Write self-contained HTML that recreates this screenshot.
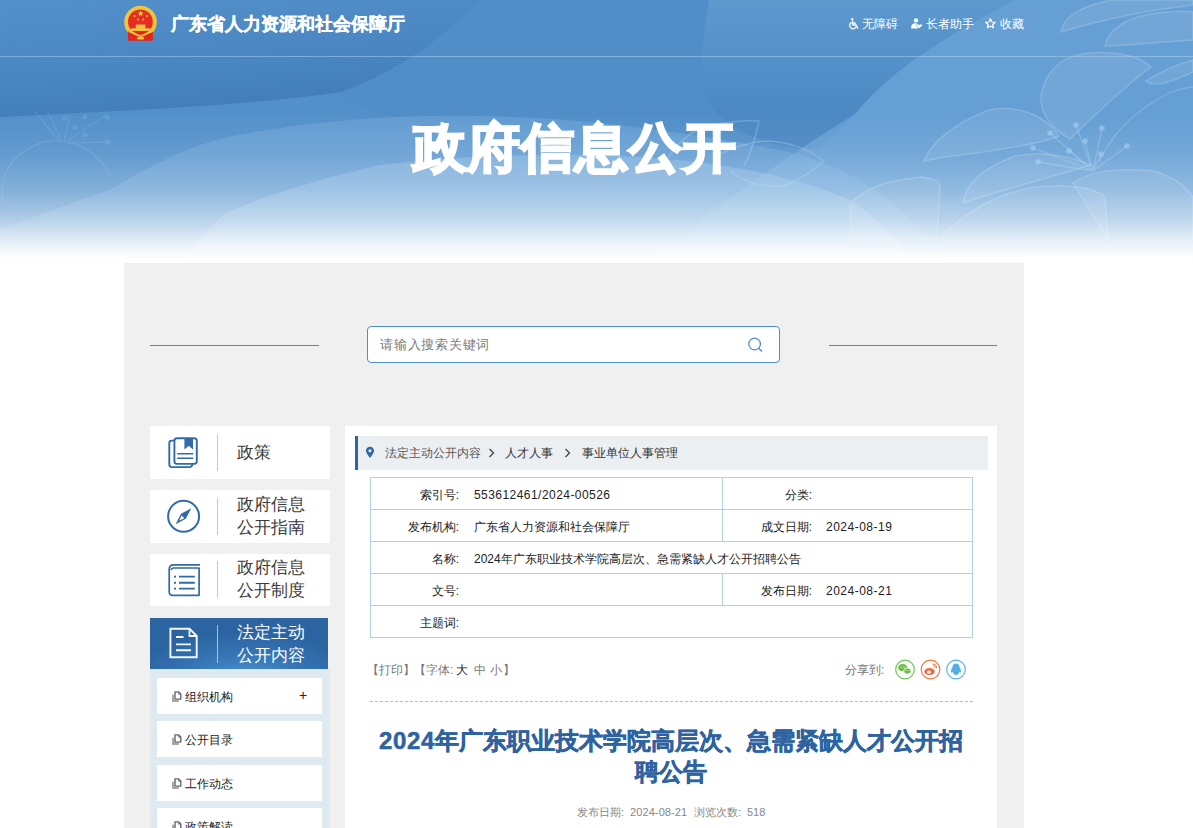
<!DOCTYPE html>
<html><head><meta charset="utf-8">
<style>
*{margin:0;padding:0;box-sizing:border-box}
html,body{width:1193px;height:828px;overflow:hidden;background:#fff;font-family:"Liberation Sans",sans-serif;color:#333}
.abs{position:absolute}
.hdr{position:absolute;left:0;top:0;width:1193px;height:263px;overflow:hidden;background:#5390ca}
.hdr svg{position:absolute;left:0;top:0}
.fade{position:absolute;left:0;top:0;width:1193px;height:263px;background:linear-gradient(180deg,rgba(255,255,255,0) 0px,rgba(255,255,255,0) 115px,rgba(255,255,255,.1) 155px,rgba(255,255,255,.28) 190px,rgba(255,255,255,.55) 220px,rgba(255,255,255,.85) 243px,#fff 259px)}
.topline{position:absolute;left:0;top:56px;width:1193px;height:1px;background:rgba(170,205,235,.55)}
.sitename{position:absolute;left:171px;top:13px;-webkit-text-stroke:0.3px #fff;font-size:18px;line-height:22px;font-weight:bold;color:#fff;white-space:nowrap}
.tools{position:absolute;top:16px;font-size:12px;line-height:16px;color:#fff;white-space:nowrap}
.bigtitle{position:absolute;left:413px;top:116px;-webkit-text-stroke:2.3px #fff;font-size:53px;letter-spacing:1.1px;line-height:64px;font-weight:bold;color:#fff;white-space:nowrap}
.wrap{position:absolute;left:124px;top:263px;width:900px;height:565px;background:#f0f0f0}
.sline{position:absolute;top:345px;height:1px;background:#4a8cc6}
.search{position:absolute;left:367px;top:326px;width:413px;height:37px;border:1px solid #4d8ecb;border-radius:4px;background:#fff}
.search span{position:absolute;left:12px;top:9px;font-size:13.3px;letter-spacing:0.75px;line-height:17px;color:#7a7a7a;white-space:nowrap}
.nav{position:absolute;left:150px;width:180px;height:53px;background:#fff}
.nav svg{position:absolute;left:0;top:0}
.nav .sep{position:absolute;left:67px;width:1px;background:#c8c8c8}
.nav .tx{position:absolute;left:87px;font-size:17px;color:#3c3c3c;line-height:23px;white-space:nowrap}
.nav.act{width:178px;height:51px;background:radial-gradient(ellipse 110px 45px at 95px 60px,#4a90d0 0%,#3574b5 55%,#2c64a2 100%)}
.nav.act .tx{color:#fff}
.nav.act .sep{background:rgba(255,255,255,.6)}
.sub{position:absolute;left:150px;top:669px;width:180px;height:159px;background:#dfe9f0}
.si{position:absolute;left:157px;width:165px;height:36px;background:#fff}
.si .t{position:absolute;left:27.5px;top:10.5px;font-size:12px;line-height:16px;color:#222;white-space:nowrap}
.si svg{position:absolute;left:15px;top:12.5px}
.main{position:absolute;left:345px;top:426px;width:652px;height:402px;background:#fff}
.bc{position:absolute;left:355px;top:436px;width:633px;height:34px;background:#eceff2;border-left:3px solid #2d67a3}
.bct{position:absolute;top:445px;font-size:12px;line-height:16px;color:#333;white-space:nowrap}
.tbl{position:absolute;left:370px;top:477px;width:603px;height:161px;border:1px solid #b5cee6}
.hl{position:absolute;left:370px;width:603px;height:1px;background:#b5cee6}
.vl{position:absolute;left:722px;width:1px;height:32px;background:#b5cee6}
.lab{position:absolute;font-size:12px;line-height:16px;color:#222;white-space:nowrap;text-align:right}
.val{position:absolute;font-size:12px;line-height:16px;color:#222;white-space:nowrap}
.g{color:#777}
.title{position:absolute;left:370px;top:726px;-webkit-text-stroke:0.5px #2e63a1;width:602px;text-align:center;font-size:24px;line-height:30.5px;font-weight:bold;color:#2e63a1}
.meta{position:absolute;top:804px;font-size:11px;line-height:16px;color:#888;white-space:nowrap}
</style></head><body>
<div class="hdr">
<svg width="1193" height="263" viewBox="0 0 1193 263">
  <defs>
    <linearGradient id="gd" x1="0" y1="0" x2="0.35" y2="1">
      <stop offset="0" stop-color="#3b76b3" stop-opacity="0"/>
      <stop offset="0.5" stop-color="#3b76b3" stop-opacity="0.3"/>
      <stop offset="1" stop-color="#3a74b0" stop-opacity="0.7"/>
    </linearGradient>
    <linearGradient id="gt" x1="0" y1="0" x2="0" y2="1">
      <stop offset="0" stop-color="#5f9ace" stop-opacity=".9"/>
      <stop offset=".6" stop-color="#4f8cc6" stop-opacity=".9"/>
      <stop offset="1" stop-color="#4683bf" stop-opacity=".9"/>
    </linearGradient>
  </defs>
  <rect width="1193" height="263" fill="#5390ca"/>
  <path d="M0 0 L480 0 C440 40 400 70 342 92 C250 105 160 109 0 117 Z" fill="url(#gd)"/>
  <path d="M480 0 L709 0 C702 50 690 95 730 125 C760 145 800 150 820 148 C700 140 560 125 400 118 C360 110 340 100 342 92 C400 70 440 40 480 0 Z" fill="#4a88c3" opacity=".2"/>
  <path d="M709 0 L1014 0 C960 30 900 60 855 114 C835 135 825 145 820 148 C800 150 760 145 730 125 C690 95 702 50 709 0 Z" fill="url(#gt)"/>
  <path d="M1014 0 L1193 0 L1193 263 L640 263 C700 220 780 160 855 114 C900 60 960 30 1014 0 Z" fill="#74abdc" opacity=".55"/>
  <path d="M0 229 C40 215 80 200 110 190 C160 160 200 140 250 133 C330 119 400 115 480 116 C600 118 700 135 780 150 C850 165 900 200 950 263 L0 263 Z" fill="#80b4e3" opacity=".35"/>
  <path d="M180 263 C200 240 215 220 230 211 C280 190 330 177 380 165 C420 160 460 157 500 156 C650 150 770 165 850 200 C880 220 900 240 910 263 Z" fill="#a3caee" opacity=".35"/>
  <g fill="#ffffff" fill-opacity=".08" stroke="#b3d4f0" stroke-opacity=".35" stroke-width="1.5">
    <path d="M1061 32 C1064 18 1075 8 1111 0 L1193 0 L1193 5 C1150 10 1100 20 1061 32 Z"/>
    <path d="M1105 46 C1108 33 1120 20 1150 14 C1170 11 1185 11 1193 12 L1193 40 C1160 42 1130 45 1105 46 Z"/>
    <path d="M1151 67 C1140 55 1110 50 1082 54 C1060 58 1045 72 1041 96 C1040 112 1050 128 1070 139 C1090 120 1120 90 1151 67 Z"/>
    <path d="M1146 81 C1150 86 1165 86 1193 72 L1193 60 C1175 65 1160 72 1146 81 Z"/>
    <path d="M924 161 C930 145 950 125 989 110 C1010 106 1035 110 1053 128 L1059 136 C1040 144 1000 150 945 157 Z"/>
    <path d="M850 203 C865 190 880 181 922 177 C932 178 940 182 940 186 L937 240 L850 240 Z"/>
    <path d="M963 203 C965 185 980 170 1012 157 C1030 152 1060 152 1091 165 C1060 175 1000 190 963 203 Z"/>
    <path d="M940 240 C950 225 980 200 1024 189 C1050 184 1090 184 1105 197 L1108 240 Z"/>
    <path d="M1073 183 C1090 172 1110 167 1154 171 C1170 176 1185 185 1193 197 L1193 240 L1108 240 Z"/>
  </g>
  <g fill="none" stroke="#b3d4f0" stroke-opacity=".35" stroke-width="1.3">
    <path d="M1099 162 C1110 140 1125 116 1169 93 C1180 89 1188 87 1193 87"/>
    <path d="M1093 171 L1076 125 M1093 171 L1102 128 M1093 171 L1050 133 M1093 171 L1085 141 M1093 171 L1069 151 M1093 171 L1033 148 M1093 171 L1101 154 M1093 171 L1127 146 M1093 171 L1038 162"/>
    <path d="M663 166 C675 145 690 130 709 126 C730 121 750 120 759 121 C755 140 750 155 744 166"/>
    <path d="M714 156 C735 148 750 141 769 141 C790 142 810 150 824 161 C810 172 800 180 784 186 C760 188 740 180 730 170"/>
  </g>
  <g fill="#a8cff0" fill-opacity=".55">
    <circle cx="1076" cy="125" r="2.8"/><circle cx="1102" cy="128" r="2.8"/><circle cx="1050" cy="133" r="2.8"/><circle cx="1085" cy="141" r="2.8"/><circle cx="1069" cy="151" r="2.8"/><circle cx="1033" cy="148" r="2.8"/><circle cx="1101" cy="154" r="2.8"/><circle cx="1127" cy="146" r="2.8"/><circle cx="1038" cy="162" r="2.8"/>
  </g>
  <g fill="none" stroke="#8fbde8" stroke-width="1.5" opacity=".22">
    <path d="M2 203 C0 175 10 155 40 143 C70 135 100 150 110 178"/>
    <path d="M60 142 L35 112 M62 142 L48 112 M64 142 L70 115 M66 142 L106 115 M68 143 L108 142"/>
  </g>
  <g fill="#8fbde8" opacity=".25">
    <circle cx="65" cy="118" r="2.5"/><circle cx="75" cy="127" r="2.5"/><circle cx="85" cy="117" r="2.5"/><circle cx="107" cy="117" r="2.5"/><circle cx="85" cy="135" r="2.5"/><circle cx="108" cy="142" r="2.5"/>
  </g>
</svg>
<div class="fade"></div>
<div class="topline"></div>
</div>
<svg class="abs" style="left:118px;top:2px" width="46" height="44" viewBox="118 2 46 44">
  <path d="M128.5 31 L152.5 31 L152.8 40.5 L128 40.5 Z" fill="#d42a1e"/>
  <circle cx="140.5" cy="22" r="16.3" fill="#f2c43a"/>
  <circle cx="140.4" cy="21.8" r="12.4" fill="#e52d22"/>
  <path d="M128 31.5 L153 31.5 L152.6 40.5 L128.4 40.5 Z" fill="#e0271e"/>
  <path d="M129 30 C133 31 137 34.5 140.6 35 C144 34.5 148 31 152.5 30 L152.5 32.5 C148 33 144 37 140.6 37 C137 37 133 33 129 32.5 Z" fill="#f2c43a"/>
  <rect x="135.8" y="24.6" width="9.6" height="4" fill="#f3c93e"/>
  <rect x="131" y="28.3" width="19.2" height="2.6" fill="#f3c93e"/>
  <path d="M140.6 10.5 L141.4 12.6 L143.6 12.7 L141.9 14 L142.5 16.1 L140.6 14.9 L138.7 16.1 L139.3 14 L137.6 12.7 L139.8 12.6 Z" fill="#f5d23e"/>
  <circle cx="134.6" cy="16" r="1" fill="#f5d23e"/>
  <circle cx="146.8" cy="16" r="1" fill="#f5d23e"/>
  <circle cx="138" cy="19.6" r="1" fill="#f5d23e"/>
  <circle cx="143.2" cy="19.6" r="1" fill="#f5d23e"/>
  <rect x="137" y="37" width="7" height="2.5" rx="1" fill="#f2c43a"/>
</svg>
<svg class="abs" style="left:845px;top:14px" width="185" height="18" viewBox="845 14 185 18">
  <g fill="none" stroke="#fff" stroke-width="1.3" stroke-linecap="round">
    <path d="M851.2 22.6 A3.4 3.4 0 1 0 856.3 26.6"/>
    <path d="M852.6 21 L852.9 25 L856 25 L857.8 28.2"/>
    <path d="M852.8 23.2 L855.4 23.2"/>
  </g>
  <circle cx="852.3" cy="19.1" r="1.2" fill="#fff"/>
  <circle cx="916" cy="20.4" r="2.1" fill="#fff"/>
  <path d="M911 28.5 C911 25 912.5 23.2 915.5 23.2 C917.5 23.2 918.5 24 919 25 L918 28.5 Z" fill="#fff"/>
  <path d="M919.3 28.6 L916.6 25.9 C915.9 25.1 916.4 23.9 917.5 23.9 C918.3 23.9 918.9 24.5 919.3 25.1 C919.7 24.5 920.3 23.9 921.1 23.9 C922.2 23.9 922.7 25.1 922 25.9 Z" fill="#fff" stroke="#5390ca" stroke-width="0.6"/>
  <path d="M990.4 18.8 L991.9 22 L995.3 22.3 L992.7 24.5 L993.5 27.8 L990.4 26 L987.3 27.8 L988.1 24.5 L985.5 22.3 L988.9 22 Z" fill="none" stroke="#fff" stroke-width="1.2" stroke-linejoin="round"/>
</svg>
<div class="sitename">广东省人力资源和社会保障厅</div>
<div class="tools" style="left:862px">无障碍</div>
<div class="tools" style="left:926px">长者助手</div>
<div class="tools" style="left:1000px">收藏</div>
<div class="bigtitle">政府信息公开</div>

<div class="wrap"></div>
<div class="sline" style="left:150px;width:169px"></div>
<div class="sline" style="left:829px;width:168px"></div>
<div class="search"><span>请输入搜索关键词</span>
<svg class="abs" style="left:378px;top:9px" width="18" height="18" viewBox="0 0 18 18"><circle cx="8.6" cy="8" r="5.8" fill="none" stroke="#4f90cc" stroke-width="1.3"/><path d="M12.8 12.3 L16 15.6" stroke="#4f90cc" stroke-width="1.4"/></svg>
</div>

<div class="nav" style="top:426px"><div class="sep" style="top:8px;height:37px"></div><div class="tx" style="top:15px">政策</div></div>
<div class="nav" style="top:490px"><div class="sep" style="top:8px;height:37px"></div><div class="tx" style="top:3px">政府信息<br>公开指南</div></div>
<div class="nav" style="top:554px;height:52px"><div class="sep" style="top:7px;height:37px"></div><div class="tx" style="top:2px">政府信息<br>公开制度</div></div>
<div class="nav act" style="top:618px"><div class="sep" style="top:7px;height:38px"></div><div class="tx" style="top:2.5px;line-height:23.5px">法定主动<br>公开内容</div></div>

<svg class="abs" style="left:160px;top:430px" width="50" height="240" viewBox="160 430 50 240">
  <g fill="none" stroke="#306ba8" stroke-width="1.9" stroke-linecap="round" stroke-linejoin="round">
    <path d="M173.5 440.6 L171.8 440.6 Q169.3 440.6 169.3 443.1 L169.3 464.6 Q169.3 467.1 171.8 467.1 L189.5 467.1 Q192 467.1 192.3 464.5"/>
    <rect x="174.4" y="438.3" width="22.4" height="25.6" rx="2.6"/>
    <path d="M177.3 453.7 L193.3 453.7 M177.3 458.3 L193.3 458.3" stroke-width="1.5" stroke-linecap="butt"/>
  </g>
  <path d="M184.4 438 L193 438 L193 449.5 L188.7 445.8 L184.4 449.5 Z" fill="#306ba8"/>
  <circle cx="183.6" cy="516.3" r="15.5" fill="none" stroke="#306ba8" stroke-width="2"/>
  <path d="M191.3 508.2 L185.8 518.8 L175.6 524.3 L181 513.8 Z" fill="#306ba8"/>
  <path d="M181.6 515.5 L184.3 518.2 L179.3 520.6 Z" fill="#fff"/>
  <g fill="none" stroke="#306ba8" stroke-width="1.7">
    <path d="M200 564.8 L173.5 564.8 Q169.2 564.8 169.2 569.5 L169.2 592 Q169.2 595.3 172.6 595.3 L199.1 595.3 L199.1 568 L173.2 568 Q171.5 568.4 171 570" stroke-linejoin="round"/>
  </g>
  <g stroke="#306ba8" stroke-width="1.9">
    <path d="M179 576.6 L194.8 576.6 M179 582.7 L194.8 582.7 M179 588.6 L194.8 588.6"/>
    <path d="M174 576.6 L176 576.6 M174 582.7 L176 582.7 M174 588.6 L176 588.6"/>
  </g>
  <g fill="none" stroke="#f4f8fc" stroke-width="1.9" stroke-linejoin="miter">
    <path d="M170.4 628.7 L189.5 628.7 L196.7 636 L196.7 657.2 L170.4 657.2 Z"/>
    <path d="M189.5 628.7 L189.5 636 L196.7 636" stroke-width="1.8"/>
    <path d="M176 637 L183.5 637 M176 644.4 L191 644.4 M176 650.3 L191 650.3" stroke-width="1.9"/>
  </g>
</svg>

<div class="sub"></div>
<div class="si" style="top:678px"><svg width="10" height="11" viewBox="0 0 10 11"><path d="M1 3.8 L1 10 L6.8 10" fill="none" stroke="#8a8a8a" stroke-width="1.5"/><path d="M3 0.9 L6.6 0.9 L8.8 3.1 L8.8 8.1 L3 8.1 Z" fill="none" stroke="#666" stroke-width="1.4" stroke-linejoin="round"/><path d="M6.3 0.9 L6.3 3.4 L8.8 3.4 Z" fill="#666"/></svg><div class="t">组织机构</div><div class="t" style="left:142px;font-size:14px;top:9px">+</div></div>
<div class="si" style="top:721px"><svg width="10" height="11" viewBox="0 0 10 11"><path d="M1 3.8 L1 10 L6.8 10" fill="none" stroke="#8a8a8a" stroke-width="1.5"/><path d="M3 0.9 L6.6 0.9 L8.8 3.1 L8.8 8.1 L3 8.1 Z" fill="none" stroke="#666" stroke-width="1.4" stroke-linejoin="round"/><path d="M6.3 0.9 L6.3 3.4 L8.8 3.4 Z" fill="#666"/></svg><div class="t">公开目录</div></div>
<div class="si" style="top:765px"><svg width="10" height="11" viewBox="0 0 10 11"><path d="M1 3.8 L1 10 L6.8 10" fill="none" stroke="#8a8a8a" stroke-width="1.5"/><path d="M3 0.9 L6.6 0.9 L8.8 3.1 L8.8 8.1 L3 8.1 Z" fill="none" stroke="#666" stroke-width="1.4" stroke-linejoin="round"/><path d="M6.3 0.9 L6.3 3.4 L8.8 3.4 Z" fill="#666"/></svg><div class="t">工作动态</div></div>
<div class="si" style="top:808px"><svg width="10" height="11" viewBox="0 0 10 11"><path d="M1 3.8 L1 10 L6.8 10" fill="none" stroke="#8a8a8a" stroke-width="1.5"/><path d="M3 0.9 L6.6 0.9 L8.8 3.1 L8.8 8.1 L3 8.1 Z" fill="none" stroke="#666" stroke-width="1.4" stroke-linejoin="round"/><path d="M6.3 0.9 L6.3 3.4 L8.8 3.4 Z" fill="#666"/></svg><div class="t">政策解读</div></div>

<div class="main"></div>
<div class="bc"></div>
<svg class="abs" style="left:364.5px;top:445.5px" width="10" height="13" viewBox="0 0 11 14"><path d="M5.5 0.8 C8.2 0.8 10 2.8 10 5.2 C10 7.8 7.3 10.6 5.5 13 C3.7 10.6 1 7.8 1 5.2 C1 2.8 2.8 0.8 5.5 0.8 Z" fill="#306ba8"/><circle cx="5.5" cy="5" r="1.7" fill="#eceff2"/></svg>
<div class="bct" style="left:385px;color:#555">法定主动公开内容</div>
<svg class="abs" style="left:488px;top:448px" width="7" height="10" viewBox="0 0 7 10"><path d="M1.5 1 L5.5 5 L1.5 9" fill="none" stroke="#444" stroke-width="1.3"/></svg>
<div class="bct" style="left:505px">人才人事</div>
<svg class="abs" style="left:564px;top:448px" width="7" height="10" viewBox="0 0 7 10"><path d="M1.5 1 L5.5 5 L1.5 9" fill="none" stroke="#444" stroke-width="1.3"/></svg>
<div class="bct" style="left:582px">事业单位人事管理</div>

<div class="tbl"></div>
<div class="hl" style="top:509px"></div>
<div class="hl" style="top:541px"></div>
<div class="hl" style="top:573px"></div>
<div class="hl" style="top:605px"></div>
<div class="vl" style="top:477px"></div>
<div class="vl" style="top:509px"></div>
<div class="vl" style="top:573px"></div>

<div class="lab" style="right:734px;top:487px">索引号:</div>
<div class="val" style="left:474px;top:487px"><span style="letter-spacing:0.45px">553612461/2024-00526</span></div>
<div class="lab" style="right:381px;top:487px">分类:</div>
<div class="lab" style="right:734px;top:519px">发布机构:</div>
<div class="val" style="left:474px;top:519px">广东省人力资源和社会保障厅</div>
<div class="lab" style="right:381px;top:519px">成文日期:</div>
<div class="val" style="left:826px;top:519px"><span style="letter-spacing:0.5px">2024-08-19</span></div>
<div class="lab" style="right:734px;top:551px">名称:</div>
<div class="val" style="left:474px;top:551px">2024年广东职业技术学院高层次、急需紧缺人才公开招聘公告</div>
<div class="lab" style="right:734px;top:583px">文号:</div>
<div class="lab" style="right:381px;top:583px">发布日期:</div>
<div class="val" style="left:826px;top:583px"><span style="letter-spacing:0.5px">2024-08-21</span></div>
<div class="lab" style="right:734px;top:615px">主题词:</div>

<div class="val g" style="left:367px;top:662px">【打印】</div>
<div class="val g" style="left:414px;top:662px">【字体:</div>
<div class="val" style="left:456px;top:662px;color:#222">大</div>
<div class="val g" style="left:474px;top:662px">中</div>
<div class="val g" style="left:490px;top:662px">小</div>
<div class="val g" style="left:503px;top:662px">】</div>
<div class="val g" style="left:845px;top:662px">分享到:</div>
<svg class="abs" style="left:893px;top:658px" width="76" height="24" viewBox="893 658 76 24">
  <circle cx="905" cy="669.5" r="9.3" fill="#fff" stroke="#72c252" stroke-width="1.2"/>
  <ellipse cx="902.6" cy="667.6" rx="4.4" ry="3.6" fill="#6cc04a"/>
  <ellipse cx="907.4" cy="671" rx="3.8" ry="3.1" fill="#6cc04a" stroke="#fff" stroke-width="0.8"/>
  <circle cx="901" cy="667" r="0.6" fill="#fff"/><circle cx="904" cy="667" r="0.6" fill="#fff"/>
  <circle cx="906" cy="670.6" r="0.5" fill="#fff"/><circle cx="908.8" cy="670.6" r="0.5" fill="#fff"/>
  <circle cx="930.5" cy="669.5" r="9.3" fill="#fff" stroke="#f4763f" stroke-width="1.2"/>
  <ellipse cx="929.5" cy="671.5" rx="5.2" ry="3.6" fill="#f26b3a"/>
  <ellipse cx="929" cy="672" rx="2.2" ry="1.6" fill="#fff"/>
  <path d="M932.5 664 A4 4 0 0 1 936.5 668" fill="none" stroke="#f26b3a" stroke-width="1.1"/>
  <path d="M933 665.8 A2 2 0 0 1 935 667.8" fill="none" stroke="#f26b3a" stroke-width="0.9"/>
  <circle cx="956" cy="669.5" r="9.3" fill="#fff" stroke="#58b4e6" stroke-width="1.2"/>
  <path d="M956 663.5 C958.5 663.5 959.6 665.5 959.6 667.5 C960.8 669 961.5 671 960.6 672.8 C960 672.5 959.6 672 959.4 671.6 C959.2 673 958.5 674 957.6 674.6 C957 675.2 955 675.2 954.4 674.6 C953.5 674 952.8 673 952.6 671.6 C952.4 672 952 672.5 951.4 672.8 C950.5 671 951.2 669 952.4 667.5 C952.4 665.5 953.5 663.5 956 663.5 Z" fill="#4fb0e4"/>
</svg>
<div class="abs" style="left:370px;top:701px;width:603px;height:0;border-top:1px dashed #bbb"></div>

<div class="title"><span style="letter-spacing:0.7px">2024</span>年广东职业技术学院高层次、急需紧缺人才公开招聘公告</div>
<div class="meta" style="left:577px">发布日期:</div>
<div class="meta" style="left:630px;letter-spacing:0.1px">2024-08-21</div>
<div class="meta" style="left:694px">浏览次数:</div>
<div class="meta" style="left:747px">518</div>
</body></html>
